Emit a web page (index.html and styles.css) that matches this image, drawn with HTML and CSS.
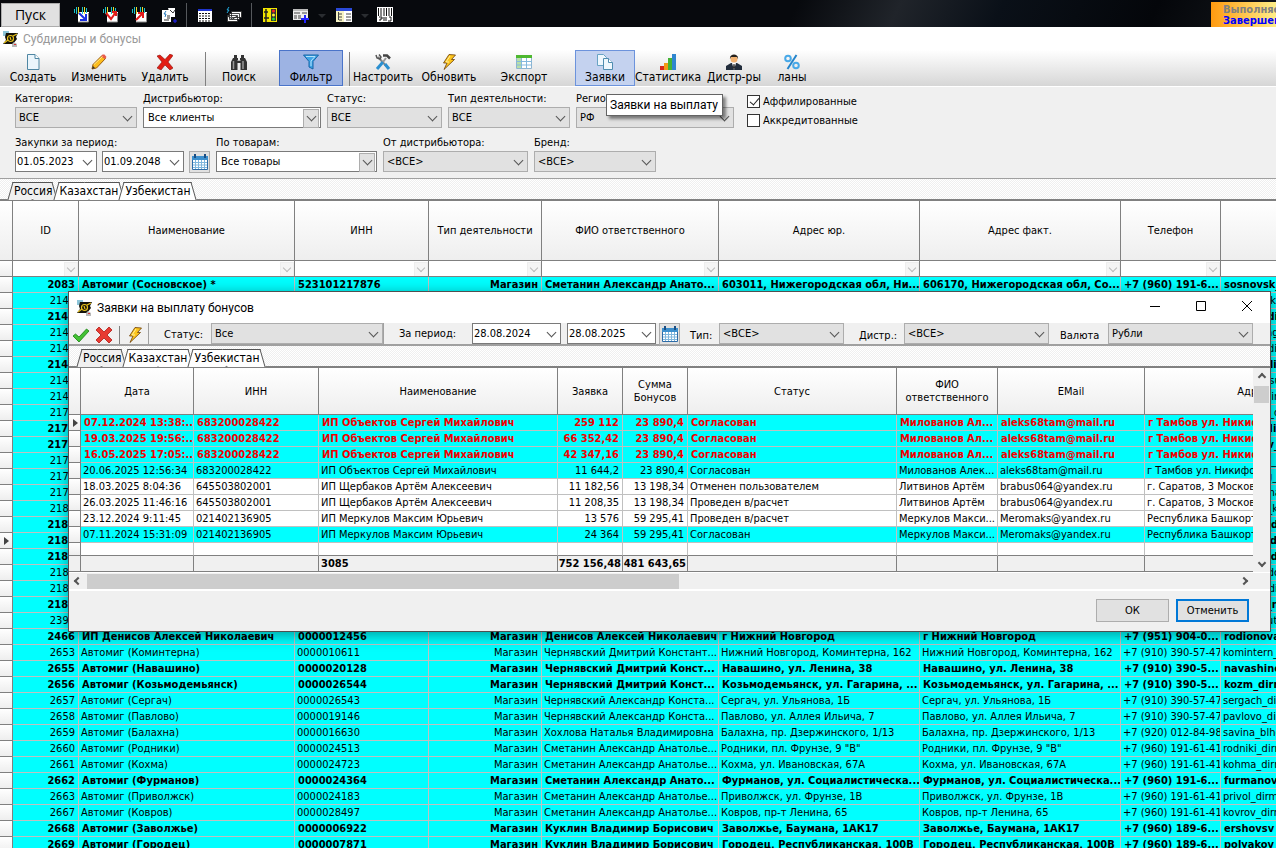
FILE: index.html
```html
<!DOCTYPE html>
<html lang="ru">
<head>
  <meta charset="UTF-8" />
  <title>Субдилеры и бонусы</title>
  <meta name="viewport" content="width=device-width, initial-scale=1" />
  <link rel="stylesheet" href="styles.css">
</head>
<body>
  <svg class="sprite" aria-hidden="true">
    <symbol id="i-app" viewBox="0 0 16 16">
      <path d="M1 0h6v5H1z" fill="#8cc4d8"/><path d="M4 2h12l-2 4 1 2-4 5H1l3-4-1-3z" fill="#15130a"/>
      <circle cx="8.500" cy="7.500" r="3" fill="none" stroke="#e8c31a" stroke-width="1.200"/><path d="M2 12l4-3M11 5l4-2M8 6l1 3" stroke="#e8c31a" stroke-width="1.200"/>
      <path d="M10 13l2-2 3 2v3h-5z" fill="#b9b9b9"/><path d="M12 13h2v1h-2z" fill="#d33"/>
    </symbol>
    <symbol id="i-new" viewBox="0 0 16 16">
      <path d="M2.500 .5h7.500l4 4v11H2.500z" fill="#eaf5fc" stroke="#4f86a3"/><path d="M10 .5v4h4" fill="#fff" stroke="#4f86a3"/>
    </symbol>
    <symbol id="i-pencil" viewBox="0 0 16 16">
      <path d="M1 15l1-4.500L11 1.500l3.500 3L5.500 14z" fill="#fdbd1c" stroke="#9a5b10"/><path d="M10 2.500l1.500-2h2L15.500 3l-1.500 2z" fill="#e75b4c"/><path d="M3 10.500l8.500-8" stroke="#ffe98c"/><path d="M1 15l1-3 2 2z" fill="#333"/>
    </symbol>
    <symbol id="i-cross" viewBox="0 0 16 16">
      <path d="M0 2l3-1 5 4.500L13 0l3 1.500L11 8l5 6-3 2-5-5-4 5-4-2 5-6z" fill="#e21d13" stroke="#8c0d08" stroke-width=".6"/>
    </symbol>
    <symbol id="i-find" viewBox="0 0 16 16">
      <path d="M2 4h1V1h3v3h1v2h2V4h1V1h3v3h1l2 4v8H9.500V9h-3v7H0V8z" fill="#333"/><path d="M2.500 7v8M12 7v8" stroke="#999" stroke-width="1.500"/><path d="M6.500 6.500h3" stroke="#bbb"/>
    </symbol>
    <symbol id="i-filter" viewBox="0 0 16 16">
      <path d="M.5 1h15L10 7.500V15l-4-2V7.500z" fill="#3ea4e6" stroke="#1564a5"/><path d="M3 2.500h9L8 7v5" fill="none" stroke="#b5e2fb"/>
    </symbol>
    <symbol id="i-tools" viewBox="0 0 16 16">
      <path d="M3 3l10 11" stroke="#888" stroke-width="2"/><path d="M1 1l1 3 3 1 1-2-2-2.500" fill="none" stroke="#555" stroke-width="1.500"/><path d="M8 8l-6 7" stroke="#2a8fd0" stroke-width="3"/><path d="M10 10l4 5" stroke="#2a8fd0" stroke-width="3"/><path d="M8 1.500h4l3 3" fill="none" stroke="#444" stroke-width="2.500"/><path d="M11 4L8 8" stroke="#999" stroke-width="2"/>
    </symbol>
    <symbol id="i-bolt" viewBox="0 0 16 16">
      <path d="M8 .5L14.500 1 10.500 5.500h3L3 15.500l3-6.500H2.500z" fill="#fdc51c" stroke="#6b3c05" stroke-width=".8"/><path d="M9 2L5 8h3" fill="none" stroke="#fff0a0"/>
    </symbol>
    <symbol id="i-table" viewBox="0 0 16 16">
      <path d="M.5 1.500h15v13H.5z" fill="#fff" stroke="#8fb4cf"/><path d="M0 1h16v3H0z" fill="#4eb82f"/><path d="M1 4h4v10H1z" fill="#b9dfa9"/><path d="M0 7.500h16M0 11h16M5.500 4v11M10.500 4v11" stroke="#84b9dd"/>
    </symbol>
    <symbol id="i-docs" viewBox="0 0 16 16">
      <path d="M.5 .5h6l3 3v8h-9z" fill="#eef7fd" stroke="#68a3c4"/><path d="M6.500 4.500h5l4 4v7h-9z" fill="#eef7fd" stroke="#4f8db0"/><path d="M11.500 4.500v4h4" fill="#fff" stroke="#4f8db0"/>
    </symbol>
    <symbol id="i-chart" viewBox="0 0 16 16">
      <path d="M0 12h4v4H0z" fill="#d8261b"/><path d="M4 9h4v7H4z" fill="#f29a13"/><path d="M8 4h4v12H8z" fill="#44b335"/><path d="M12 0h4v16h-4z" fill="#2f86cf"/>
    </symbol>
    <symbol id="i-man" viewBox="0 0 16 16">
      <path d="M0 16v-4l5-3h6l5 3v4z" fill="#222d3c"/><path d="M6 9h4l-2 7z" fill="#fff"/><path d="M7.500 10h1l.5 4-1 1-1-1z" fill="#222"/><circle cx="8" cy="5" r="3.500" fill="#f2b271"/><path d="M4 5c-1-6 9-6 8 0l-1-2H5z" fill="#26211c"/>
    </symbol>
    <symbol id="i-percent" viewBox="0 0 16 16">
      <circle cx="4" cy="4.500" r="2.800" fill="none" stroke="#49a9e8" stroke-width="2"/><circle cx="12" cy="11.500" r="2.800" fill="none" stroke="#49a9e8" stroke-width="2"/><path d="M12.500 1l-9 14" stroke="#2484cb" stroke-width="2"/>
    </symbol>
    <symbol id="i-calendar" viewBox="0 0 16 16">
      <path d="M.5 2.500h15v13H.5z" fill="#fff" stroke="#2e6ca7"/><path d="M0 2h16v4H0z" fill="#3c8fcd"/><path d="M3 0v4M13 0v4" stroke="#1b4e83" stroke-width="2"/><path d="M1 8.500h14M1 11h14M1 13.500h14M3.500 6v9M6.500 6v9M9.500 6v9M12.500 6v9" stroke="#7eb6dd"/>
    </symbol>
    <symbol id="i-check" viewBox="0 0 16 16">
      <path d="M0 9l2.500-2L6 10l7.500-8L16 4 6 15z" fill="#43c234" stroke="#16800f" stroke-width=".8"/>
    </symbol>
    <symbol id="i-no" viewBox="0 0 16 16">
      <path d="M0 3l3-3 5 5 5-5 3 3-5 5 5 5-3 3-5-5-5 5-3-3 5-5z" fill="#e83a32" stroke="#b01a14" stroke-width=".8"/>
    </symbol>
    <symbol id="i-phone" viewBox="0 0 16 16">
      <path d="M4 5h11v10H4z" fill="#fff"/><path d="M14.500 6v9H4" fill="none" stroke="#888"/><path d="M.5 2v4M2.500 0v7M8.500 0v7M12.500 1v5" stroke="#19c5cc"/><path d="M4.500 0v7M10.500 0v7" stroke="#e6dd2a"/>
    </symbol>
    <symbol id="i-list" viewBox="0 0 16 16">
      <path d="M1 2h14v13H1z" fill="#fff"/><path d="M1 2h14v2H1z" fill="#1f35d0"/><path d="M2 6.500h12M2 9h12M2 11.500h12M2 14h12" stroke="#111" stroke-dasharray="2 1"/>
    </symbol>
    <symbol id="i-card" viewBox="0 0 16 16">
      <path d="M1 3h9v12H1zM7 1h7v9h-4" fill="#fff"/><path d="M9 3l3 3 2-3M6 9h3M6 11h3M3 13h5" fill="none" stroke="#333"/><path d="M5 4L3 7h2l-1 3" fill="none" stroke="#27b"/><path d="M12 14h4M14 12v4" stroke="#22f"/>
    </symbol>
    <symbol id="i-mails" viewBox="0 0 16 16">
      <path d="M5.500 4.500h10v6h-10zM3.500 6.500h10v6h-10zM1.500 8.500h10v6h-10z" fill="#fff" stroke="#222" stroke-width=".8"/><path d="M1.500 9l5 3 5-3" fill="none" stroke="#222"/><path d="M3 0L1 3h2L1 6" fill="none" stroke="#2ad"/>
    </symbol>
    <symbol id="i-traffic" viewBox="0 0 16 16">
      <path d="M1 1h14v14H1z" fill="#f2e600"/><path d="M4 2v13M2 5h4M2 11h5" stroke="#222" stroke-width="1.500"/><path d="M9 2h5v12H9z" fill="#333"/><circle cx="11.500" cy="4" r="1.500" fill="#f22"/><circle cx="11.500" cy="8" r="1.500" fill="#fe3"/><circle cx="11.500" cy="12" r="1.500" fill="#2d3"/>
    </symbol>
    <symbol id="i-addtable" viewBox="0 0 16 16">
      <path d="M0 2h15v11H0z" fill="#eee"/><path d="M0 2h15v2H0z" fill="#bbb"/><path d="M1 6h6M9 6h5M1 9h3M5 9h3M1 11h3M5 11h3" stroke="#444"/><path d="M8 12h8M12 8v8" stroke="#22f" stroke-width="2"/>
    </symbol>
    <symbol id="i-tree" viewBox="0 0 16 16">
      <path d="M0 1h16v14H0z" fill="#f7f3c4"/><path d="M0 1h16v3H0z" fill="#2a49d8"/><path d="M8 4h8v11H8z" fill="#fff"/><path d="M2.500 5v8M3 7h3M3 10h3M3 13h3M10 7h5M10 10h5M10 13h5" stroke="#444"/>
    </symbol>
    <symbol id="i-barcode" viewBox="0 0 16 16">
      <path d="M0 0h16v15H0z" fill="#fff"/><path d="M1.500 1v8M4 1v8M7 1v8M9.500 1v8M12 1v8M14.500 1v8" stroke="#111"/><path d="M2 10h3v2H3v2M7 10v4M9 10v4M12 10h2v4h-3" fill="none" stroke="#111"/>
    </symbol>
  </svg>

  <header class="taskbar">
    <button class="start-btn">Пуск</button>
    <button class="task-btn first" aria-label="Исходящий звонок"><svg><use href="#i-phone"/><path d="M5 6l6 6M12 7v6H6" fill="none" stroke="#1a2fe0" stroke-width="2"/></svg></button>
    <button class="task-btn" aria-label="Перевод звонка"><svg><use href="#i-phone"/><path d="M3 6l5 6 5-7M9 5h4v4" fill="none" stroke="#e01b1b" stroke-width="2"/></svg></button>
    <button class="task-btn" aria-label="Входящий звонок"><svg><use href="#i-phone"/><path d="M4 13l7-7M6 6h5v5" fill="none" stroke="#e01b1b" stroke-width="2"/></svg></button>
    <button class="task-btn" aria-label="Документы"><svg><use href="#i-card"/></svg></button>
    <span class="task-sep"></span>
    <button class="task-btn" aria-label="Таблица"><svg><use href="#i-list"/></svg></button>
    <button class="task-btn" aria-label="Почта"><svg><use href="#i-mails"/></svg></button>
    <span class="task-sep"></span>
    <button class="task-btn" aria-label="Контроль"><svg><use href="#i-traffic"/></svg></button>
    <button class="task-btn drop" aria-label="Добавить"><svg><use href="#i-addtable"/></svg></button>
    <button class="task-btn drop" aria-label="Дерево"><svg><use href="#i-tree"/></svg></button>
    <button class="task-btn" aria-label="Штрихкод"><svg><use href="#i-barcode"/></svg></button>
    <div class="task-state"><span>Выполняется</span><b>Завершено</b></div>
  </header>

  <div class="caption"><svg><use href="#i-app"/></svg>Субдилеры и бонусы</div>

  <nav class="toolbar">
    <button><svg><use href="#i-new"/></svg>Создать</button>
    <button><svg><use href="#i-pencil"/></svg>Изменить</button>
    <button><svg><use href="#i-cross"/></svg>Удалить</button>
    <span class="sep"></span>
    <button><svg><use href="#i-find"/></svg>Поиск</button>
    <button class="pressed"><svg><use href="#i-filter"/></svg>Фильтр</button>
    <span class="sep"></span>
    <button><svg><use href="#i-tools"/></svg>Настроить</button>
    <button><svg><use href="#i-bolt"/></svg>Обновить</button>
    <button class="export"><svg><use href="#i-table"/></svg>Экспорт</button>
    <div class="tip-anchor">
      <button class="hot" aria-describedby="tip"><svg><use href="#i-docs"/></svg>Заявки</button>
      <span class="tooltip" id="tip" role="tooltip">Заявки на выплату</span>
    </div>
    <button><svg><use href="#i-chart"/></svg>Статистика</button>
    <button><svg><use href="#i-man"/></svg>Дистр-ры</button>
    <button class="narrow"><svg><use href="#i-percent"/></svg>ланы</button>
  </nav>

  <section class="filters">
    <div class="filter-row">
      <div class="field w122"><label for="category">Категория:</label><span class="combo"><select id="category"><option>ВСЕ</option></select></span></div>
      <div class="field w178"><label for="distributor">Дистрибьютор:</label><span class="combo lookup"><input id="distributor" value="Все клиенты"></span></div>
      <div class="field w115"><label for="status">Статус:</label><span class="combo"><select id="status"><option>ВСЕ</option></select></span></div>
      <div class="field w122"><label for="activity">Тип деятельности:</label><span class="combo"><select id="activity"><option>ВСЕ</option></select></span></div>
      <div class="field w158"><label for="region">Регион:</label><span class="combo"><select id="region"><option>РФ</option></select></span></div>
      <div class="checks">
        <label><input type="checkbox" checked>Аффилированные</label>
        <label><input type="checkbox">Аккредитованные</label>
      </div>
    </div>
    <div class="filter-row">
      <div class="field">
        <label for="date-from">Закупки за период:</label>
        <div class="period">
          <span class="combo date w82"><input id="date-from" value="01.05.2023"></span>
          <span class="combo date w82"><input aria-label="Конец периода" value="01.09.2048"></span>
          <button class="cal-btn" aria-label="Выбрать период"><svg><use href="#i-calendar"/></svg></button>
        </div>
      </div>
      <div class="field w161"><label for="goods">По товарам:</label><span class="combo lookup"><input id="goods" value="Все товары"></span></div>
      <div class="field w145"><label for="from-distr">От дистрибьютора:</label><span class="combo"><select id="from-distr"><option>&lt;ВСЕ&gt;</option></select></span></div>
      <div class="field w122"><label for="brand">Бренд:</label><span class="combo"><select id="brand"><option>&lt;ВСЕ&gt;</option></select></span></div>
    </div>
  </section>

  <div class="tabs">
    <button class="active">Россия</button><button>Казахстан</button><button>Узбекистан</button>
  </div>

  <main class="grid-box">
    <table class="grid" id="dealers">
      <colgroup>
        <col class="c13"><col class="c66"><col class="c216"><col class="c134"><col class="c113"><col class="c177"><col class="c201"><col class="c201"><col class="c100"><col>
      </colgroup>
      <thead>
        <tr><th></th><th>ID</th><th>Наименование</th><th>ИНН</th><th>Тип деятельности</th><th>ФИО ответственного</th><th>Адрес юр.</th><th>Адрес факт.</th><th>Телефон</th><th></th></tr>
        <tr class="filter-line"><td></td><td></td><td></td><td></td><td></td><td></td><td></td><td></td><td></td><td></td></tr>
      </thead>
      <tbody></tbody>
    </table>
  </main>

  <section class="dialog" role="dialog" aria-labelledby="dialog-title">
    <header class="dialog-title">
      <svg class="app-icon"><use href="#i-app"/></svg>
      <span id="dialog-title">Заявки на выплату бонусов</span>
      <button class="win-btn" aria-label="Свернуть"><svg viewBox="0 0 12 12"><path d="M1 6.500h10" stroke="#000"/></svg></button>
      <button class="win-btn" aria-label="Развернуть"><svg viewBox="0 0 12 12"><path d="M1.500 1.500h9v9h-9z" fill="none" stroke="#000"/></svg></button>
      <button class="win-btn" aria-label="Закрыть"><svg viewBox="0 0 12 12"><path d="M1 1l10 10M11 1L1 11" stroke="#000"/></svg></button>
    </header>

    <div class="dialog-bar">
      <div class="icons">
        <button aria-label="Согласовать"><svg><use href="#i-check"/></svg></button>
        <button aria-label="Отклонить"><svg><use href="#i-no"/></svg></button>
        <span class="sep"></span>
        <button aria-label="Обновить"><svg><use href="#i-bolt"/></svg></button>
      </div>
      <label for="d-status">Статус:</label><span class="combo w172"><select id="d-status"><option>Все</option></select></span>
      <span class="edge"></span>
      <label for="d-from">За период:</label><span class="combo date w89"><input id="d-from" value="28.08.2024"></span>
      <span class="combo date w89"><input aria-label="Конец периода заявок" value="28.08.2025"></span>
      <button class="cal-btn" aria-label="Выбрать период заявок"><svg><use href="#i-calendar"/></svg></button>
      <label for="d-type">Тип:</label><span class="combo w125"><select id="d-type"><option>&lt;ВСЕ&gt;</option></select></span>
      <label for="d-distr">Дистр.:</label><span class="combo w145"><select id="d-distr"><option>&lt;ВСЕ&gt;</option></select></span>
      <label for="d-currency">Валюта</label><span class="combo w145"><select id="d-currency"><option>Рубли</option></select></span>
    </div>

    <div class="tabs">
      <button class="active">Россия</button><button>Казахстан</button><button>Узбекистан</button>
    </div>

    <div class="dialog-grid">
      <div class="grid-view">
        <table class="grid" id="requests">
          <colgroup>
            <col class="c12"><col class="c113"><col class="c125"><col class="c239"><col class="c65"><col class="c65"><col class="c209"><col class="c101"><col class="c147"><col>
          </colgroup>
          <thead>
            <tr><th></th><th>Дата</th><th>ИНН</th><th>Наименование</th><th>Заявка</th><th>Сумма<br>Бонусов</th><th>Статус</th><th>ФИО<br>ответственного</th><th>EMail</th><th>Адрес</th></tr>
          </thead>
          <tbody></tbody>
          <tfoot>
            <tr class="blank"><td></td><td></td><td></td><td></td><td></td><td></td><td></td><td></td><td></td><td></td></tr>
            <tr class="totals"><td></td><td></td><td></td><td>3085</td><td class="num">752 156,48</td><td class="num">481 643,65</td><td></td><td></td><td></td><td></td></tr>
          </tfoot>
        </table>
      </div>
      <div class="vscroll"><i class="arrow up"></i><span class="thumb"></span><i class="arrow down"></i></div>
    </div>
    <div class="hscroll"><i class="arrow left"></i><span class="thumb"></span><i class="arrow right"></i></div>

    <footer class="dialog-foot">
      <button>ОК</button>
      <button class="default">Отменить</button>
    </footer>
  </section>

  <script>
    // [жирный, ID, наименование, ИНН, ФИО, адрес юр., адрес факт., телефон, почта]
    const dealers = [
      [1, "2083", "Автомиг (Сосновское) *", "523101217876", "Сметанин Александр Анато...", "603011, Нижегородская обл, Ни...", "606170, Нижегородская обл, Со...", "+7 (960) 191-6...", "sosnovsk_dir"],
      [0, "2141", "", "", "", "", "", "", "arzamas_k1"],
      [1, "2142", "", "", "", "", "", "", "bor_____dir"],
      [0, "2143", "", "", "", "", "", "", "vyksa_magaz"],
      [0, "2144", "", "", "", "", "", "", "gorodec_dirm"],
      [1, "2145", "", "", "", "", "", "", "kstovo_dir"],
      [0, "2146", "", "", "", "", "", "", "kulebaki_su"],
      [0, "2147", "", "", "", "", "", "", "lyskovo_dirm"],
      [0, "2171", "", "", "", "", "", "", "murom_k_dirm"],
      [1, "2172", "", "", "", "", "", "", "pavlov_dir"],
      [1, "2173", "", "", "", "", "", "", "semenov_dir"],
      [0, "2174", "", "", "", "", "", "", "shahunya_dir"],
      [0, "2175", "", "", "", "", "", "", "uren_mag_dir"],
      [0, "2176", "", "", "", "", "", "", "vetluga_mail"],
      [0, "2181", "", "", "", "", "", "", "vacha_m_k2"],
      [1, "2182", "", "", "", "", "", "", "volga_a_dir"],
      [1, "2183", "", "", "", "", "", "", "vorsma_dir"],
      [1, "2184", "", "", "", "", "", "", "zavolzh_dir"],
      [0, "2185", "", "", "", "", "", "", "balahna_dog"],
      [0, "2186", "", "", "", "", "", "", "bogorod_dirm"],
      [1, "2187", "", "", "", "", "", "", "chkalov_na"],
      [0, "2391", "", "", "", "", "", "", "dzerzh_auto"],
      [1, "2466", "ИП Денисов Алексей Николаевич", "0000012456", "Денисов Алексей Николаевич", "г Нижний Новгород", "г Нижний Новгород", "+7 (951) 904-0...", "rodionova_dir"],
      [0, "2653", "Автомиг (Коминтерна)", "0000010611", "Чернявский Дмитрий Констант...", "Нижний Новгород, Коминтерна, 162", "Нижний Новгород, Коминтерна, 162", "+7 (910) 390-57-47", "komintern_dirm"],
      [1, "2655", "Автомиг (Навашино)", "0000020128", "Чернявский Дмитрий Конст...", "Навашино, ул. Ленина, 38", "Навашино, ул. Ленина, 38", "+7 (910) 390-5...", "navashino_dir"],
      [1, "2656", "Автомиг (Козьмодемьянск)", "0000026544", "Чернявский Дмитрий Конст...", "Козьмодемьянск, ул. Гагарина, ...", "Козьмодемьянск, ул. Гагарина, ...", "+7 (910) 390-5...", "kozm_dirm"],
      [0, "2657", "Автомиг (Сергач)", "0000026543", "Чернявский Александр Конста...", "Сергач, ул. Ульянова, 1Б", "Сергач, ул. Ульянова, 1Б", "+7 (910) 390-57-47", "sergach_dirm"],
      [0, "2658", "Автомиг (Павлово)", "0000019146", "Чернявский Александр Конста...", "Павлово, ул. Аллея Ильича, 7", "Павлово, ул. Аллея Ильича, 7", "+7 (910) 390-57-47", "pavlovo_dirm"],
      [0, "2659", "Автомиг (Балахна)", "0000016630", "Хохлова Наталья Владимировна", "Балахна, пр. Дзержинского, 1/13", "Балахна, пр. Дзержинского, 1/13", "+7 (920) 012-84-98", "savina_blh@mail"],
      [0, "2660", "Автомиг (Родники)", "0000024513", "Сметанин Александр Анатолье...", "Родники, пл. Фрунзе, 9 \"В\"", "Родники, пл. Фрунзе, 9 \"В\"", "+7 (960) 191-61-41", "rodniki_dirm"],
      [0, "2661", "Автомиг (Кохма)", "0000024723", "Сметанин Александр Анатолье...", "Кохма, ул. Ивановская, 67А", "Кохма, ул. Ивановская, 67А", "+7 (960) 191-61-41", "kohma_dirm"],
      [1, "2662", "Автомиг (Фурманов)", "0000024364", "Сметанин Александр Анато...", "Фурманов, ул. Социалистическа...", "Фурманов, ул. Социалистическа...", "+7 (960) 191-6...", "furmanov_dir"],
      [0, "2663", "Автомиг (Приволжск)", "0000024183", "Сметанин Александр Анатолье...", "Приволжск, ул. Фрунзе, 1В", "Приволжск, ул. Фрунзе, 1В", "+7 (960) 191-61-41", "privol_dirm"],
      [0, "2667", "Автомиг (Ковров)", "0000028497", "Сметанин Александр Анатолье...", "Ковров, пр-т Ленина, 65", "Ковров, пр-т Ленина, 65", "+7 (960) 191-61-41", "kovrov_dirm"],
      [1, "2668", "Автомиг (Заволжье)", "0000006922", "Куклин Владимир Борисович", "Заволжье, Баумана, 1АК17", "Заволжье, Баумана, 1АК17", "+7 (960) 189-6...", "ershovsv"],
      [1, "2669", "Автомиг (Городец)", "0000007871", "Куклин Владимир Борисович", "Городец, Республиканская, 100В", "Городец, Республиканская, 100В", "+7 (960) 189-6...", "polyakov_dir"]
    ];

    // [класс строки, дата, ИНН, наименование, заявка, бонусы, статус, ФИО, почта, адрес]
    const requests = [
      ["cyan alert", "07.12.2024 13:38:...", "683200028422", "ИП Объектов Сергей Михайлович", "259 112", "23 890,4", "Согласован", "Милованов Ал...", "aleks68tam@mail.ru", "г Тамбов ул. Никифоровская"],
      ["cyan alert", "19.03.2025 19:56:...", "683200028422", "ИП Объектов Сергей Михайлович", "66 352,42", "23 890,4", "Согласован", "Милованов Ал...", "aleks68tam@mail.ru", "г Тамбов ул. Никифоровская"],
      ["cyan alert", "16.05.2025 17:05:...", "683200028422", "ИП Объектов Сергей Михайлович", "42 347,16", "23 890,4", "Согласован", "Милованов Ал...", "aleks68tam@mail.ru", "г Тамбов ул. Никифоровская"],
      ["cyan", "20.06.2025 12:56:34", "683200028422", "ИП Объектов Сергей Михайлович", "11 644,2", "23 890,4", "Согласован", "Милованов Алек...", "aleks68tam@mail.ru", "г Тамбов ул. Никифоровская"],
      ["", "18.03.2025 8:04:36", "645503802001", "ИП Щербаков Артём Алексеевич", "11 182,56", "13 198,34", "Отменен пользователем", "Литвинов Артём", "brabus064@yandex.ru", "г. Саратов, 3 Московский"],
      ["", "26.03.2025 11:46:16", "645503802001", "ИП Щербаков Артём Алексеевич", "11 208,35", "13 198,34", "Проведен в/расчет", "Литвинов Артём", "brabus064@yandex.ru", "г. Саратов, 3 Московский"],
      ["", "23.12.2024 9:11:45", "021402136905", "ИП Меркулов Максим Юрьевич", "13 576", "59 295,41", "Проведен в/расчет", "Меркулов Макси...", "Meromaks@yandex.ru", "Республика Башкортостан"],
      ["cyan", "07.11.2024 15:31:09", "021402136905", "ИП Меркулов Максим Юрьевич", "24 364", "59 295,41", "Согласован", "Меркулов Макси...", "Meromaks@yandex.ru", "Республика Башкортостан"]
    ];

    function addRow(tbody, className, cells, numeric, current) {
      const row = tbody.insertRow();
      row.className = className;
      const mark = row.insertCell();
      if (current) mark.className = "current";
      cells.forEach((text, i) => {
        const cell = row.insertCell();
        cell.textContent = text;
        if (numeric.includes(i)) cell.className = "num";
      });
    }

    const dealersBody = document.querySelector("#dealers tbody");
    dealers.forEach(([bold, id, name, inn, ...rest], i) => {
      addRow(dealersBody, bold ? "cyan bold" : "cyan", [id, name, inn, "Магазин", ...rest], [0, 3], i === 16);
    });

    const requestsBody = document.querySelector("#requests tbody");
    requests.forEach(([className, ...cells], i) => {
      addRow(requestsBody, className, cells, [3, 4], i === 0);
    });
  </script>
</body>
</html>
```
FILE: styles.css
```css
* {
  box-sizing: border-box;
}

body {
  margin: 0;
  height: 100vh;
  display: flex;
  flex-direction: column;
  position: relative;
  overflow: hidden;
  background: #f0f0f0;
  color: #000;
  font: 11px/14px "DejaVu Sans Condensed", Tahoma, sans-serif;
}

button, input, select {
  font: inherit;
  color: inherit;
  margin: 0;
  border-radius: 0;
}

svg {
  width: 16px;
  height: 16px;
  flex: none;
}

.sprite {
  position: absolute;
  width: 0;
  height: 0;
}

/* верхняя панель */
.taskbar {
  display: flex;
  align-items: center;
  flex: none;
  height: 27px;
  padding: 2px 0 0 1px;
  background: linear-gradient(115deg, #07090d 0 62%, #20242a 70%, #0a1018 78%, #04060a 90%, #14171b);
}

.start-btn {
  width: 59px;
  height: 24px;
  padding: 0;
  border: 1px solid #adadad;
  background: #e1e1e1;
  font: 14px/20px "Open Sans", sans-serif;
}

.task-btn {
  width: 29px;
  height: 24px;
  padding: 4px 0 0;
  border: 0;
  background: none;
}

.task-btn.first {
  margin-left: 7px;
}

.task-btn.drop {
  position: relative;
  width: 43px;
  padding-right: 10px;
}

.task-btn.drop::after {
  content: "";
  position: absolute;
  right: 1px;
  top: 11px;
  border: 4px solid transparent;
  border-top-color: #2a2d31;
}

.task-sep {
  width: 1px;
  height: 24px;
  margin: 0 3px;
  background: #55585c;
}

.task-state {
  width: 65px;
  height: 25px;
  margin-left: auto;
  padding-left: 12px;
  overflow: hidden;
  background: linear-gradient(90deg, #ff9a10, #ffee88);
  font-weight: bold;
  line-height: 11px;
  white-space: nowrap;
}

.task-state span {
  display: block;
  padding-top: 2px;
  color: #808080;
}

.task-state b {
  color: #0000ff;
}

.caption {
  display: flex;
  align-items: center;
  gap: 5px;
  flex: none;
  height: 23px;
  padding-left: 2px;
  background: #fff;
  color: #999;
  font: 12px/16px Roboto, sans-serif;
}

/* панель инструментов */
.toolbar {
  display: flex;
  flex: none;
  height: 37px;
  background: linear-gradient(#fff, #d6d6d6);
  border-bottom: 1px solid #fff;
}

.toolbar button {
  display: flex;
  flex-direction: column;
  align-items: center;
  width: 66px;
  height: 36px;
  padding: 3px 0 0;
  border: 1px solid transparent;
  background: none;
  font-size: 12px;
  line-height: 14px;
  white-space: nowrap;
}

.toolbar .pressed {
  width: 64px;
  margin: 0 6px 0 7px;
  border-color: #4a74c9;
  background: #9db3e3;
}

.toolbar .export {
  margin: 0 18px 0 9px;
}

.toolbar .hot {
  width: 60px;
  border-color: #6c93dc;
  background: #c4d2ef;
}

.toolbar .narrow {
  width: 50px;
}

.sep {
  width: 1px;
  margin: 2px 0 0;
  background: #808080;
}

.toolbar .sep:nth-of-type(1) {
  margin-left: 7px;
}

.toolbar .pressed + .sep {
  margin-left: 0;
}

.tip-anchor {
  position: relative;
}

.tooltip {
  position: absolute;
  z-index: 5;
  left: 31px;
  top: 44px;
  padding: 3px 4px 2px 3px;
  border: 1px solid #646464;
  background: #fff;
  box-shadow: 3px 3px 3px #0007;
  font: 12px/15px Roboto, sans-serif;
  white-space: nowrap;
}

/* фильтры */
.filters {
  flex: none;
  height: 92px;
  padding: 4px 0 0 15px;
  border-bottom: 1px solid #a0a0a0;
}

.filter-row {
  display: flex;
  gap: 6px;
  height: 44px;
}

.field label {
  display: block;
  height: 16px;
  padding-top: 1px;
  white-space: nowrap;
}

.combo {
  position: relative;
  display: block;
  height: 21px;
}

.combo select, .combo input {
  appearance: none;
  display: block;
  width: 100%;
  height: 100%;
  padding: 0 18px 0 3px;
  border: 1px solid #adadad;
  background: #e1e1e1;
  outline: none;
}

.combo input {
  border-color: #7a7a7a;
  background: #fff;
}

.combo.date input {
  padding-left: 1px;
}

.combo.lookup input {
  padding-left: 4px;
}

.combo.lookup::before {
  content: "";
  position: absolute;
  right: 2px;
  top: 2px;
  width: 14px;
  height: 17px;
  border: 1px solid #adadad;
  background: #e1e1e1;
}

.combo::after {
  content: "";
  position: absolute;
  right: 6px;
  top: 6px;
  width: 6px;
  height: 6px;
  border: solid #555;
  border-width: 0 1px 1px 0;
  transform: rotate(45deg);
}

.checks {
  padding: 1px 0 0 7px;
}

.checks label {
  display: flex;
  align-items: center;
  gap: 3px;
  height: 19px;
}

.checks input {
  appearance: none;
  width: 13px;
  height: 13px;
  border: 1px solid #333;
  background: #fff;
}

.checks input:checked::after {
  content: "";
  display: block;
  width: 4px;
  height: 8px;
  margin: 0 0 0 4px;
  border: solid #222;
  border-width: 0 1px 1px 0;
  transform: rotate(40deg);
}

.period {
  display: flex;
  gap: 5px;
}

.cal-btn {
  width: 21px;
  height: 22px;
  padding: 2px 0 0;
  border: 1px solid #adadad;
  background: #e1e1e1;
}

.w82 { width: 82px; }
.w89 { width: 89px; }
.w115 { width: 115px; }
.w122 { width: 122px; }
.w125 { width: 125px; }
.w145 { width: 145px; }
.w158 { width: 158px; }
.w161 { width: 161px; }
.w172 { width: 172px; }
.w178 { width: 178px; }

/* вкладки */
.tabs {
  display: flex;
  flex: none;
  height: 22px;
  padding: 3px 0 0 10px;
  background: repeating-conic-gradient(#fff 0 25%, #efefef 0 50%) 0 0 / 2px 2px;
  border-bottom: 2px solid #808080;
}

.tabs button {
  position: relative;
  z-index: 1;
  height: 17px;
  padding: 0 3px 0 4px;
  border: 0;
  background: none;
  font-size: 12px;
  line-height: 16px;
}

.tabs button::before, .tabs button::after {
  content: "";
  position: absolute;
  z-index: -1;
  top: 0;
  width: 51%;
  height: 17px;
  border-top: 1px solid #555;
  background: #fff;
}

.tabs button::before {
  left: 0;
  border-left: 1px solid #555;
  transform: skewX(-16deg);
}

.tabs button::after {
  right: 0;
  border-right: 1px solid #555;
  transform: skewX(16deg);
}

.tabs .active::before, .tabs .active::after {
  background: #f0f0f0;
}

/* таблицы */
.grid-box {
  flex: 1;
  min-height: 0;
  overflow: hidden;
  background: #fff;
}

.grid {
  width: 1400px;
  table-layout: fixed;
  border-collapse: separate;
  border-spacing: 0;
}

.grid th {
  height: 60px;
  padding: 0;
  border: solid #808080;
  border-width: 0 1px 1px 0;
  background: linear-gradient(#fff, #eee);
  font-weight: normal;
  line-height: 13px;
}

.grid td {
  height: 16px;
  padding: 0 0 0 2px;
  border: solid #c0c0c0;
  border-width: 0 1px 1px 0;
  line-height: 15px;
  white-space: nowrap;
  overflow: hidden;
}

.grid td:first-child {
  border-color: #808080;
  padding: 0;
  background: linear-gradient(#fff, #eee);
}

.grid .filter-line td {
  position: relative;
  border-color: #808080;
}

.filter-line td:nth-child(n + 2)::before {
  content: "";
  position: absolute;
  right: 0;
  top: 1px;
  width: 12px;
  height: 14px;
  background: #f5f5f5;
  border: 1px solid #eee;
}

.filter-line td:nth-child(n + 2)::after {
  content: "";
  position: absolute;
  right: 4px;
  top: 4px;
  width: 5px;
  height: 5px;
  border: solid #bbb;
  border-width: 0 1px 1px 0;
  transform: rotate(45deg);
}

.grid .cyan td:nth-child(n + 2) {
  background: #00ffff;
}

.grid .bold td, .grid .alert td {
  font-weight: bold;
}

.grid .bold td:nth-child(n + 2), .grid .alert td:nth-child(n + 2) {
  padding-left: 3px;
}

.grid .alert td {
  color: #f00000;
}

.grid tr .num {
  padding: 0 3px 0 0;
  text-align: right;
}

.grid tr.bold .num, .grid tr.alert .num {
  padding-left: 0;
}

.grid .current::after {
  content: "";
  display: block;
  width: 0;
  margin-left: 4px;
  border: 4px solid transparent;
  border-left: 5px solid #444;
  border-right: 0;
}

.c12 { width: 12px; }
.c13 { width: 13px; }
.c65 { width: 65px; }
.c66 { width: 66px; }
.c100 { width: 100px; }
.c101 { width: 101px; }
.c113 { width: 113px; }
.c125 { width: 125px; }
.c134 { width: 134px; }
.c147 { width: 147px; }
.c177 { width: 177px; }
.c201 { width: 201px; }
.c209 { width: 209px; }
.c216 { width: 216px; }
.c239 { width: 239px; }

/* окно заявок */
.dialog {
  position: absolute;
  z-index: 3;
  left: 68px;
  right: 5px;
  top: 291px;
  border: 1px solid #505050;
  background: #f0f0f0;
  box-shadow: 0 3px 14px #0006;
}

.dialog-title {
  display: flex;
  align-items: center;
  height: 31px;
  padding-left: 7px;
  background: #fff;
  font: 12px/16px Roboto, sans-serif;
}

.dialog-title span {
  flex: 1;
  padding-left: 5px;
}

.win-btn {
  width: 46px;
  height: 30px;
  padding: 1px 0 0;
  border: 0;
  background: none;
}

.win-btn svg {
  width: 12px;
  height: 12px;
}

.dialog-bar {
  display: flex;
  height: 23px;
  border-bottom: 2px solid #a0a0a0;
  white-space: nowrap;
}

.dialog-bar .icons {
  display: flex;
  align-items: center;
  gap: 7px;
  width: 80px;
  padding-left: 4px;
  border-right: 1px solid #a0a0a0;
}

.icons button {
  width: 16px;
  height: 18px;
  padding: 2px 0 0;
  border: 0;
  background: none;
}

.icons .sep {
  height: 18px;
}

.dialog-bar label {
  padding: 6px 0 0 15px;
}

.dialog-bar .edge {
  border-left: 1px solid #a0a0a0;
}

.dialog-bar label[for="d-from"] {
  width: 88px;
  padding-top: 4px;
}

.dialog-bar label[for="d-status"] {
  width: 62px;
  padding-top: 5px;
}

.dialog-bar label[for="d-type"] {
  width: 39px;
  padding-left: 10px;
}

.dialog-bar label[for="d-distr"],
.dialog-bar label[for="d-currency"] {
  width: 60px;
}

.dialog-bar label[for="d-currency"] {
  width: 59px;
  padding-left: 11px;
}

.dialog-bar .date + .date {
  margin: 0 3px 0 6px;
}

.dialog-grid {
  display: flex;
  background: #fff;
}

.grid-view {
  flex: 1;
  min-width: 0;
  overflow: hidden;
}

#requests {
  width: 1293px;
}

#requests th {
  height: 47px;
}

#requests .blank td {
  height: 13px;
  border-bottom-color: #808080;
}

#requests .totals td {
  background: #f0f0f0;
  border-color: #808080;
  font-weight: bold;
}

#requests .totals .num {
  padding-right: 1px;
}

.vscroll {
  display: flex;
  flex-direction: column;
  align-items: center;
  width: 17px;
  background: #f0f0f0;
}

.vscroll .thumb {
  width: 15px;
  height: 17px;
  margin-bottom: auto;
  background: #cdcdcd;
}

.hscroll {
  display: flex;
  align-items: center;
  height: 19px;
  padding-right: 17px;
  border: solid #fff;
  border-width: 1px 0 2px;
}

.hscroll .thumb {
  width: 50%;
  height: 15px;
  margin-right: auto;
  background: #cdcdcd;
}

.arrow {
  flex: none;
  width: 6px;
  height: 6px;
  margin: 6px;
  border: solid #555;
  border-width: 2px 2px 0 0;
}

.arrow.up { transform: rotate(-45deg); }
.arrow.right { transform: rotate(45deg); }
.arrow.down { transform: rotate(135deg); }
.arrow.left { transform: rotate(-135deg); }

.dialog-foot {
  display: flex;
  justify-content: flex-end;
  gap: 7px;
  padding: 8px 21px 9px 0;
}

.dialog-foot button {
  width: 73px;
  height: 23px;
  padding: 0;
  border: 1px solid #adadad;
  background: #e1e1e1;
}

.dialog-foot .default {
  border: 2px solid #0078d7;
}
```
